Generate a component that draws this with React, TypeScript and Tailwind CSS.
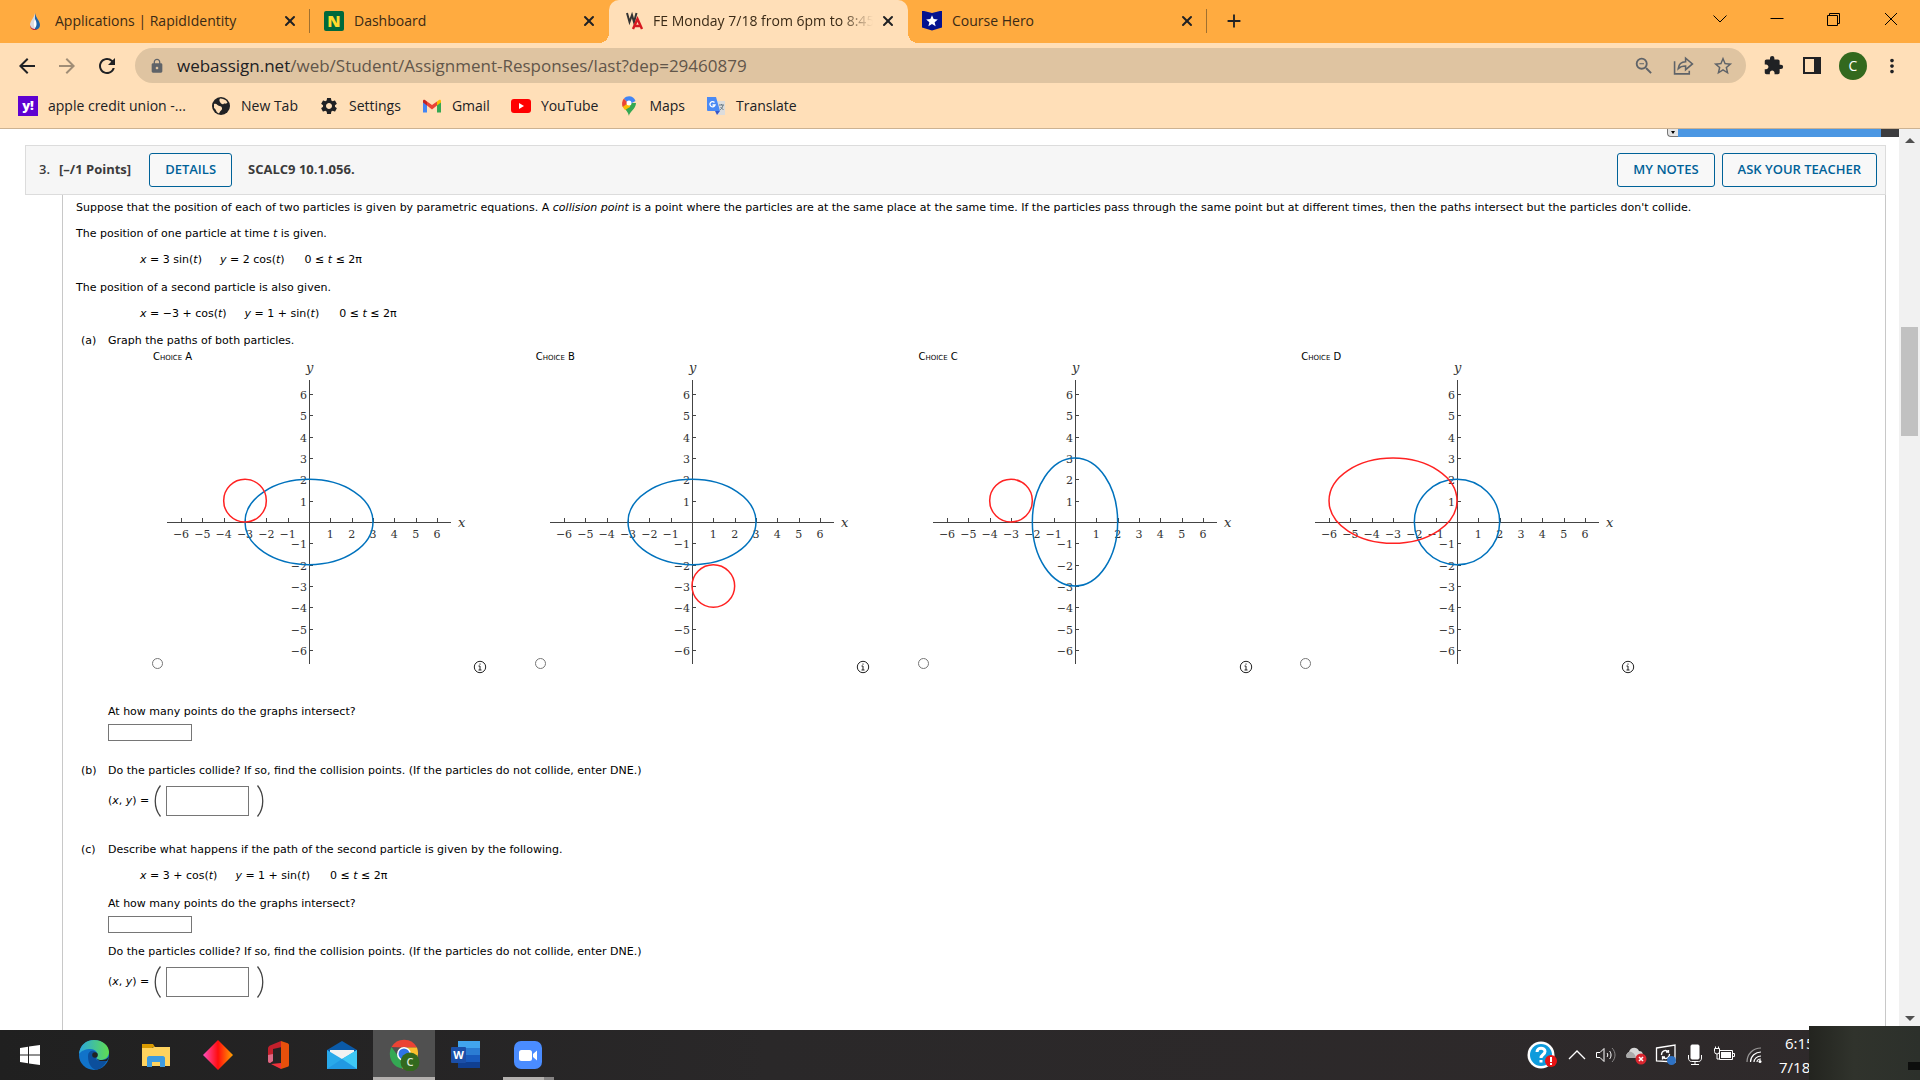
import React from "react";
import { X } from "lucide-react";
import {
  MdArrowBack,
  MdArrowForward,
  MdExtension,
  MdLock,
  MdMoreVert,
  MdRefresh,
  MdSettings,
  MdStar,
  MdStarBorder,
  MdZoomOut,
  MdAdd,
} from "react-icons/md";

type Curve = { cx: number; cy: number; rx: number; ry: number };

const UNIT = 21.33;
const ORIGIN_X = 146;
const ORIGIN_Y = 159;
const TICKS = [-6, -5, -4, -3, -2, -1, 1, 2, 3, 4, 5, 6];

const choices: { id: string; blue: Curve; red: Curve }[] = [
  { id: "A", blue: { cx: 0, cy: 0, rx: 3, ry: 2 }, red: { cx: -3, cy: 1, rx: 1, ry: 1 } },
  { id: "B", blue: { cx: 0, cy: 0, rx: 3, ry: 2 }, red: { cx: 1, cy: -3, rx: 1, ry: 1 } },
  { id: "C", blue: { cx: 0, cy: 0, rx: 2, ry: 3 }, red: { cx: -3, cy: 1, rx: 1, ry: 1 } },
  { id: "D", blue: { cx: 0, cy: 0, rx: 2, ry: 2 }, red: { cx: -3, cy: 1, rx: 3, ry: 2 } },
];

const format = (n: number) => (n < 0 ? `−${-n}` : `${n}`);

const DropIcon = () => (
  <svg viewBox="0 0 20 20" className="size-5">
    <path d="M10 2C9 7 5 10 5 14a5 5 0 0 0 5 5z" fill="#d9d9de" />
    <path d="M10 2c1 5 5 8 5 12a5 5 0 0 1-5 5z" fill="#1c62a8" />
    <path d="M5 14c1 4 4 3.500 7 4.500-3 1.500-7 0-7-4.500z" fill="#c4202f" />
    <path d="M10 8c2 3 2 7 0 9-1.500-2-1.500-6 0-9z" fill="#fff" />
  </svg>
);

const NIcon = () => (
  <span className="grid size-5 place-items-center rounded-xs bg-[#00693c] text-base leading-5 font-black text-[#ffd92e]">
    N
  </span>
);

const WaIcon = () => (
  <svg viewBox="0 0 20 20" className="size-5">
    <path d="M2 2l2.500 9L7 4l2 7 2.500-9" fill="none" stroke="#333" strokeWidth="2" />
    <path d="M8 18l4.500-10L17 18M9.500 15h6" fill="none" stroke="#d6181f" strokeWidth="2.400" />
  </svg>
);

const HeroIcon = () => (
  <span className="grid size-5 place-items-center bg-[#04128f] text-white [clip-path:polygon(0_0,50%_12%,100%_0,100%_85%,50%_100%,0_85%)]">
    <MdStar className="size-3.5" />
  </span>
);

const tabs = [
  { title: "Applications | RapidIdentity", icon: <DropIcon />, active: false, divider: true },
  { title: "Dashboard", icon: <NIcon />, active: false, divider: false },
  { title: "FE Monday 7/18 from 6pm to 8:45", icon: <WaIcon />, active: true, divider: false },
  { title: "Course Hero", icon: <HeroIcon />, active: false, divider: true },
];

const TabStrip = () => (
  <div className="flex h-[43px] items-center bg-[#ffab40] text-[14px] text-[#3a2a16]">
    <div className="flex h-full pl-[11px]">
      {tabs.map((tab) => (
        <div
          key={tab.title}
          className={
            tab.active
              ? "relative flex h-full w-[299px] items-center rounded-t-[10px] bg-[#ffdfb8] pr-3 pb-0.5 pl-4"
              : "relative flex h-full w-[299px] items-center pr-3 pb-0.5 pl-[14px]"
          }
        >
          {tab.active && (
            <>
              <span className="absolute bottom-0 -left-[10px] size-[10px] bg-[radial-gradient(circle_at_0_0,#ffab40_10px,#ffdfb8_10px)]" />
              <span className="absolute -right-[10px] bottom-0 size-[10px] bg-[radial-gradient(circle_at_100%_0,#ffab40_10px,#ffdfb8_10px)]" />
            </>
          )}
          {tab.icon}
          <span
            className={
              tab.active
                ? "ml-2 w-[220px] overflow-hidden whitespace-nowrap [mask-image:linear-gradient(to_right,black_85%,transparent)]"
                : "ml-[10px] w-[220px] overflow-hidden whitespace-nowrap"
            }
          >
            {tab.title}
          </span>
          <button aria-label="Close tab" className="ml-auto text-[#202124]">
            <X className="size-4" strokeWidth={3} />
          </button>
          {tab.divider && <span className="absolute top-[9px] right-0 h-6 w-px bg-[#a0702f]" />}
        </div>
      ))}
    </div>
    <button aria-label="New tab" className="ml-4 pb-0.5 text-[#202124]">
      <MdAdd className="size-[22px]" />
    </button>
    <div className="ml-auto flex items-center gap-[39px] pr-5 pb-[6px] text-black">
      <button aria-label="Search tabs">
        <svg viewBox="0 0 18 18" className="size-[18px]" fill="none" stroke="currentColor">
          <path d="M2.500 5.500L9 12l6.500-6.500" />
        </svg>
      </button>
      <button aria-label="Minimize">
        <svg viewBox="0 0 18 18" className="size-[18px]" stroke="currentColor">
          <path d="M2.500 8.500h13" />
        </svg>
      </button>
      <button aria-label="Restore">
        <svg viewBox="0 0 18 18" className="size-[18px]" fill="none" stroke="currentColor">
          <path d="M2.500 5.500h10v10h-10zM4.500 5.500v-2h10v10h-2" />
        </svg>
      </button>
      <button aria-label="Close">
        <svg viewBox="0 0 18 18" className="size-[18px]" fill="none" stroke="currentColor">
          <path d="M3 3l12 12M15 3L3 15" />
        </svg>
      </button>
    </div>
  </div>
);

const Toolbar = () => (
  <div className="flex h-[45px] items-center pr-[17px] pl-[15px] text-[#202124]">
    <button aria-label="Back">
      <MdArrowBack className="size-6" />
    </button>
    <button aria-label="Forward" className="ml-4 text-[#a08d76]">
      <MdArrowForward className="size-6" />
    </button>
    <button aria-label="Reload" className="ml-4">
      <MdRefresh className="size-6" />
    </button>
    <div className="ml-4 flex h-[35px] flex-1 items-center rounded-full bg-[#dfc4a1] pr-3 pl-[14px] text-[#5f6368]">
      <MdLock className="size-4" />
      <div className="ml-3 text-[17px] text-[#62564a]">
        <span className="text-[#202124]">webassign.net</span>
        /web/Student/Assignment-Responses/last?dep=29460879
      </div>
      <div className="ml-auto flex items-center gap-[18px]">
        <MdZoomOut className="size-[22px]" />
        <svg viewBox="0 0 20 20" className="size-[21px]" fill="none" stroke="currentColor" strokeWidth="1.500">
          <path d="M1.500 6v12h14v-3" />
          <path d="M5 13c.5-4.500 3-6.500 7-6.500V3l6.500 5.500L12 14v-3.500c-3 0-5 .5-7 2.500z" />
        </svg>
        <MdStarBorder className="size-[22px]" />
      </div>
    </div>
    <div className="ml-[17px] flex items-center">
      <MdExtension className="size-[21px]" />
      <span className="ml-[19px] h-[17px] w-[18px] border-2 border-r-7 border-current" />
      <span className="ml-[18px] grid size-7 place-items-center rounded-full bg-[#33691e] text-[14px] text-white">C</span>
      <MdMoreVert className="ml-[14px] size-[22px]" />
    </div>
  </div>
);

const bookmarks = [
  {
    title: "apple credit union -...",
    icon: (
      <span className="grid size-5 place-items-center bg-[#5f01d1] text-[13px] leading-none font-extrabold text-white">
        y!
      </span>
    ),
  },
  {
    title: "New Tab",
    icon: (
      <svg viewBox="0 0 20 20" className="size-5">
        <circle cx="10" cy="10" r="9" fill="#202124" />
        <path d="M3 8c3-1 3 2 5.500 2S12 13 10 14.500 9 18 7 17 5 13 3 12zM9 2.500c3 0 6 1 7.500 4-1.500 2-3 .5-4 1.500S9.500 7 9 6 8 4 9 2.500z" fill="#ffdfb8" />
      </svg>
    ),
  },
  { title: "Settings", icon: <MdSettings className="size-5 text-[#202124]" /> },
  {
    title: "Gmail",
    icon: (
      <svg viewBox="0 0 20 20" className="size-5">
        <path d="M1 5v11.500h4V8z" fill="#4285f4" />
        <path d="M19 5v11.500h-4V8z" fill="#34a853" />
        <path d="M15 5.500l2-1.500c1-.6 2 0 2 1v1.500l-4 3z" fill="#fbbc04" />
        <path d="M1 5c0-1 1-1.600 2-1l2 1.500v4l-4-3z" fill="#c5221f" />
        <path d="M5 5.500L10 9l5-3.500v4L10 13.500 5 9.500z" fill="#ea4335" />
      </svg>
    ),
  },
  {
    title: "YouTube",
    icon: (
      <svg viewBox="0 0 20 20" className="size-5">
        <rect y="3" width="20" height="14" rx="3" fill="#f00" />
        <path d="M8 7v6l5-3z" fill="#fff" />
      </svg>
    ),
  },
  {
    title: "Maps",
    icon: (
      <svg viewBox="0 0 20 20" className="size-5">
        <path d="M10 20c0-4 7-7 7-13h-7L4.500 11.500C7 14 9 16 10 20z" fill="#34a853" />
        <path d="M3.500 9L12 5l-1 6-5 3C4.500 12.500 3.700 11 3.500 9z" fill="#fbbc04" />
        <path d="M5 2.500L9 7l-5.300 4C2.500 8 3 4.500 5 2.500z" fill="#ea4335" />
        <path d="M5 2.500C8-1 15-.5 16.500 5L11 8 9 7z" fill="#4285f4" />
        <circle cx="10" cy="7" r="2.500" fill="#fff" />
      </svg>
    ),
  },
  {
    title: "Translate",
    icon: (
      <svg viewBox="0 0 20 20" className="size-5">
        <path d="M8 5h11v14h-7z" fill="#dcdcdc" />
        <path d="M1 1h9l4 14H2a1 1 0 0 1-1-1z" fill="#4a8af4" />
        <path d="M9 15h5l-3 4z" fill="#3556c9" />
        <path d="M8.500 6.500A2.600 2.600 0 1 0 9 9H6.500" fill="none" stroke="#fff" strokeWidth="1.300" />
        <path d="M13 9h5M15.500 8v1M17 9c-.5 3-2 4-3 5M14.500 11l3 3" fill="none" stroke="#6a7b86" />
      </svg>
    ),
  },
];

const BookmarkBar = () => (
  <nav className="flex h-10 items-center gap-[21px] pb-[5px] pl-[18px] text-[14px]">
    {bookmarks.map((item) => (
      <a key={item.title} href="#" className="flex items-center gap-[10px] text-[#202124] first:w-[172px]">
        {item.icon}
        {item.title}
      </a>
    ))}
  </nav>
);

const Graph = ({ blue, red }: { blue: Curve; red: Curve }) => {
  const ellipse = (c: Curve, stroke: string) => (
    <ellipse
      cx={ORIGIN_X + c.cx * UNIT}
      cy={ORIGIN_Y - c.cy * UNIT}
      rx={c.rx * UNIT}
      ry={c.ry * UNIT}
      fill="none"
      stroke={stroke}
      strokeWidth="1.500"
    />
  );
  return (
    <svg
      viewBox="0 0 311 310"
      className="h-[310px] w-[311px] overflow-visible font-['DejaVu_Serif',serif] text-[11px]"
      fill="#333"
    >
      <g stroke="#444">
        <path d="M4 159.500h284M146.500 17v284" fill="none" />
        {TICKS.map((n) => (
          <path
            key={n}
            d={`M${Math.round(ORIGIN_X + n * UNIT) + 0.5} 159v-4M146 ${Math.round(ORIGIN_Y - n * UNIT) + 0.5}h4`}
          />
        ))}
      </g>
      {TICKS.map((n) => (
        <React.Fragment key={n}>
          <text x={ORIGIN_X + n * UNIT} y={ORIGIN_Y + 16} textAnchor="middle">
            {format(n)}
          </text>
          <text x={ORIGIN_X - 2} y={ORIGIN_Y - n * UNIT + 5} textAnchor="end">
            {format(n)}
          </text>
        </React.Fragment>
      ))}
      <text x="143" y="9" className="text-[13px] italic">
        y
      </text>
      <text x="295" y="164" className="text-[13px] italic">
        x
      </text>
      {ellipse(blue, "#0072bd")}
      {ellipse(red, "#ff2222")}
    </svg>
  );
};

const InfoIcon = () => (
  <svg viewBox="0 0 12 12" className="size-3 overflow-visible" fill="none" stroke="#222">
    <circle cx="6" cy="6" r="5.700" />
    <path d="M4.500 5h1.500v4M4.500 9h3M6 2.500v1.200" />
  </svg>
);

const Equations = ({ x, y }: { x: string; y: string }) => (
  <p className="flex gap-5 whitespace-pre">
    <span className="-mr-[2px]">
      <i>x</i> = {x}(<i>t</i>)
    </span>
    <span>
      <i>y</i> = {y}(<i>t</i>)
    </span>
    <span>
      0 ≤ <i>t</i> ≤ 2π
    </span>
  </p>
);

const CountAnswer = ({ id }: { id: string }) => (
  <div>
    <label htmlFor={id} className="block">
      At how many points do the graphs intersect?
    </label>
    <input id={id} className="mt-1 block h-[17px] w-[84px] border border-[#767676] bg-white px-1" />
  </div>
);

const PointAnswer = ({ id }: { id: string }) => (
  <div className="mt-1.5 flex h-8 items-center">
    <label htmlFor={id} className="w-[46px]">
      (<i>x</i>, <i>y</i>) =
    </label>
    <svg viewBox="0 0 7 32" className="h-8 w-[7px]" fill="none" stroke="#444">
      <path d="M6.500.5C-.5 9-.5 23 6.500 31.500" strokeWidth="1.300" />
    </svg>
    <input id={id} className="ml-[5px] h-[30px] w-[83px] border border-[#767676] bg-white px-1" />
    <svg viewBox="0 0 7 32" className="ml-2 h-8 w-[7px]" fill="none" stroke="#444">
      <path d="M.5.5c7 8.500 7 22.500 0 31" strokeWidth="1.300" />
    </svg>
  </div>
);

const Part = ({ letter, children }: { letter: string; children: React.ReactNode }) => (
  <div className="flex pl-[5px]">
    <span className="w-[27px] shrink-0">({letter})</span>
    <div className="flex-1">{children}</div>
  </div>
);

const outlineButton =
  "flex h-[34px] items-center rounded-[3px] border border-[#006298] bg-[#f8f8f8] px-[15px] text-[13px] font-semibold text-[#006298]";

const Question = () => (
  <section className="mt-2 mr-[13px] ml-[25px] flex flex-1 flex-col">
    <header className="flex h-[50px] items-center border border-[#dcdcdc] bg-[#f6f6f6] pr-2 pl-[13px] font-['Open_Sans',sans-serif] text-[13px] font-bold text-[#3b3b3b]">
      <span className="w-5 font-semibold">3.</span>
      <span>[–/1 Points]</span>
      <button className={`${outlineButton} mr-4 ml-[18px]`}>DETAILS</button>
      <span>SCALC9 10.1.056.</span>
      <div className="ml-auto flex gap-[7px]">
        <button className={outlineButton}>MY NOTES</button>
        <button className={outlineButton}>ASK YOUR TEACHER</button>
      </div>
    </header>
    <div className="ml-[37px] flex-1 border-x border-[#c8c8c8] pt-[5px] pl-[13px] font-['DejaVu_Sans',sans-serif] text-[11px] leading-4 text-black">
      <p className="whitespace-nowrap">
        Suppose that the position of each of two particles is given by parametric equations. A <i>collision point</i> is
        a point where the particles are at the same place at the same time. If the particles pass through the same point
        but at different times, then the paths intersect but the particles don't collide.
      </p>
      <p className="mt-[10px]">
        The position of one particle at time <i>t</i> is given.
      </p>
      <div className="mt-[10px] ml-16">
        <Equations x="3 sin" y="2 cos" />
      </div>
      <p className="mt-3">The position of a second particle is also given.</p>
      <div className="mt-[10px] ml-16">
        <Equations x="−3 + cos" y="1 + sin" />
      </div>
      <div className="mt-[11px]">
        <Part letter="a">
          Graph the paths of both particles.
          <div className="mt-0.5 grid max-w-[1575px] grid-cols-4 pl-11">
            {choices.map((choice) => (
              <div key={choice.id} className="w-fit">
                <label htmlFor={`choice-${choice.id}`} className="ml-px block text-[10px] leading-3 [font-variant:small-caps]">
                  Choice {choice.id}
                </label>
                <div className="flex items-end">
                  <input
                    id={`choice-${choice.id}`}
                    type="radio"
                    name="paths"
                    className="mb-1 size-[11px] appearance-none rounded-full border border-[#767676] bg-white"
                  />
                  <Graph blue={choice.blue} red={choice.red} />
                  <InfoIcon />
                </div>
              </div>
            ))}
          </div>
          <div className="mt-[31px]">
            <CountAnswer id="count-a" />
          </div>
        </Part>
      </div>
      <div className="mt-[22px]">
        <Part letter="b">
          Do the particles collide? If so, find the collision points. (If the particles do not collide, enter DNE.)
          <PointAnswer id="point-b" />
        </Part>
      </div>
      <div className="mt-[25px]">
        <Part letter="c">
          Describe what happens if the path of the second particle is given by the following.
          <div className="mt-[10px] mb-3 ml-8">
            <Equations x="3 + cos" y="1 + sin" />
          </div>
          <CountAnswer id="count-c" />
          <p className="mt-[11px]">
            Do the particles collide? If so, find the collision points. (If the particles do not collide, enter DNE.)
          </p>
          <PointAnswer id="point-c" />
        </Part>
      </div>
    </div>
  </section>
);

const Scrollbar = () => (
  <div className="flex w-[21px] shrink-0 flex-col items-center bg-[#f1f1f1] py-[9px]">
    <span className="border-x-5 border-b-5 border-x-transparent border-b-[#505050]" />
    <span className="mt-[184px] h-[109px] w-[17px] bg-[#c1c1c1]" />
    <span className="mt-auto border-x-5 border-t-5 border-x-transparent border-t-[#505050]" />
  </div>
);

const taskbarApps = [
  {
    name: "Edge",
    icon: (
      <svg viewBox="0 0 32 32" className="size-8">
        <defs>
          <linearGradient id="edgeTop" x1="0" x2="1">
            <stop offset="0" stopColor="#2aa7e0" />
            <stop offset="1" stopColor="#5fdc50" />
          </linearGradient>
        </defs>
        <circle cx="16" cy="16" r="15" fill="#1173c9" />
        <path d="M1 15C2 6 8 1 16 1c9 0 15 6 15 12 0 5-4 8-8 8-3 0-5-1-4-3 2-4-2-8-6-8C7 10 3 12 1 15z" fill="url(#edgeTop)" />
        <path d="M10 17c0-4 3-6 6-5 4 2 3 5 2 6-1 2 1 4 5 4 3 0 5-1 6-1-2 5-6 9-11 10-6-2-8-8-8-14z" fill="#0c4f9c" />
        <path d="M19 18c-1 2 1 4 5 4h5l3-6c-2 4-5 5-9 5-3 0-5-1-4-3z" fill="#222" />
        <circle cx="17" cy="16" r="2.800" fill="#222" />
      </svg>
    ),
  },
  {
    name: "File Explorer",
    icon: (
      <svg viewBox="0 0 32 32" className="size-8">
        <path d="M2 5h11l2 3h-2l-2 2H2z" fill="#d99a00" />
        <path d="M2 9h10l2-1h16v19H2z" fill="#ffd35e" />
        <path d="M7 28v-9c0-1 1-2 2-2h14c1 0 2 1 2 2v9h-5v-5h-8v5z" fill="#3d9be0" />
      </svg>
    ),
  },
  {
    name: "Diamond",
    icon: (
      <svg viewBox="0 0 32 32" className="size-8">
        <defs>
          <linearGradient id="diamond" x1="0" x2="1">
            <stop offset="0" stopColor="#ff4fc0" />
            <stop offset="0.500" stopColor="#ff0d0d" />
            <stop offset="1" stopColor="#ffa200" />
          </linearGradient>
        </defs>
        <path d="M16 1l15 15-15 15L1 16z" fill="url(#diamond)" />
      </svg>
    ),
  },
  {
    name: "Office",
    icon: (
      <svg viewBox="0 0 32 32" className="size-8">
        <path d="M17 2L6 6.500c-1 .5-2 1.500-2 3V22c0 1 1 2 2 2l3-2V10l9-2z" fill="#c2202c" />
        <path d="M4 16v6c0 1 1 2 2 2l3-2v-7z" fill="#dd6a86" />
        <path d="M17 2l6 2c1 .4 2 1 2 2v20c0 1-1 2-2 2l-6 2z" fill="#e8500b" />
        <path d="M7 25l10-1v6z" fill="#f0323c" />
      </svg>
    ),
  },
  {
    name: "Mail",
    icon: (
      <svg viewBox="0 0 32 32" className="size-8">
        <path d="M1 11L16 2l15 9v10H1z" fill="#0a5aa8" />
        <path d="M4 11h24v9H4z" fill="#f2f2f2" />
        <path d="M1 11l15 9 15-9v19H1z" fill="#29a9ea" />
        <path d="M31 11L16 20l15 10z" fill="#3ec8f5" />
        <path d="M16 20l15 10H1z" fill="#1c8fdc" opacity="0.600" />
      </svg>
    ),
  },
  {
    name: "Chrome",
    icon: (
      <svg viewBox="0 0 32 32" className="size-8">
        <path d="M3.500 8A14.500 14.500 0 0 1 29 8.500H15z" fill="#ea4335" />
        <path d="M3.500 8C-1 17 4 28 14 29.500l6-11L10 17z" fill="#34a853" />
        <path d="M29 8.500c4 11-4 21-15 21l7-12-2-9z" fill="#fbc02d" />
        <circle cx="16" cy="15" r="7" fill="#fff" />
        <circle cx="16" cy="15" r="5.500" fill="#2f74e8" />
        <circle cx="22" cy="23" r="9.500" fill="#33691e" />
        <text x="22" y="27" textAnchor="middle" fill="#dfe8d8" className="text-[11px] font-semibold">
          C
        </text>
      </svg>
    ),
  },
  {
    name: "Word",
    icon: (
      <svg viewBox="0 0 32 32" className="size-8">
        <path d="M8 2h22v7H8z" fill="#41a5ee" />
        <path d="M8 9h22v7H8z" fill="#2b7cd3" />
        <path d="M8 16h22v7H8z" fill="#185abd" />
        <path d="M8 23h22v6H8z" fill="#103f91" />
        <rect x="1" y="8" width="15" height="16" rx="1" fill="#1b4fa8" />
        <text x="8.500" y="20" textAnchor="middle" fill="#fff" className="text-[11px] font-bold">
          W
        </text>
      </svg>
    ),
  },
  {
    name: "Zoom",
    icon: (
      <svg viewBox="0 0 32 32" className="size-8">
        <rect x="2" y="2" width="28" height="28" rx="7" fill="#4a8cff" />
        <rect x="7" y="11" width="13" height="11" rx="2.500" fill="#fff" />
        <path d="M21 15l4-3.500v10L21 18z" fill="#fff" />
      </svg>
    ),
  },
];

const Tray = () => (
  <div className="flex items-center gap-2 pr-4 text-white">
    <svg viewBox="0 0 32 28" className="h-7 w-8">
      <circle cx="14" cy="14" r="13.500" fill="#fff" />
      <circle cx="14" cy="14" r="11" fill="#0d9bdc" />
      <path d="M10 11c0-5 8-5 8-.500 0 3-4 3-4 6.500M14 19v2.500" fill="none" stroke="#fff" strokeWidth="3" />
      <circle cx="24" cy="20" r="6" fill="#e81313" />
      <path d="M24 16v5M24 22v2" stroke="#fff" strokeWidth="2" />
    </svg>
    <svg viewBox="0 0 20 20" className="size-5" fill="none" stroke="currentColor" strokeWidth="1.300">
      <path d="M2 14l8-8 8 8" />
    </svg>
    <svg viewBox="0 0 22 20" className="h-5 w-[22px]" fill="none" stroke="currentColor">
      <path d="M1.500 7.500H5l4-4v13l-4-4H1.500zM12 8c1 1 1 3 0 4M14.500 6c2 2 2 6 0 8" />
      <path d="M17 3c4 4 4 10 0 14" stroke="#8a8888" />
    </svg>
    <svg viewBox="0 0 22 20" className="h-5 w-[22px]">
      <path d="M2 13a4 4 0 0 1 2-6c1-5 8-6 10-1 4 0 4 3 4 7z" fill="#d6d6d6" />
      <path d="M2 13a4 4 0 0 1 2-6c2-1 6 1 7 6z" fill="#a9a9a9" />
      <circle cx="16" cy="14" r="5.500" fill="#d7262f" />
      <path d="M14 12l4 4M18 12l-4 4" stroke="#fff" strokeWidth="1.500" />
    </svg>
    <svg viewBox="0 0 22 22" className="size-[22px]" fill="none" stroke="currentColor" strokeWidth="1.300">
      <path d="M1.500 4L20 1v17l-18.500-1z" />
      <path d="M6.500 11c0-4 4-6 7-3v-2M13.500 8h-2.500M14.500 10c0 4-4 6-7 3v2.500M7.500 13H10" />
      <circle cx="16.500" cy="16.500" r="4.500" fill="#2f72c4" stroke="none" />
    </svg>
    <svg viewBox="0 0 20 22" className="h-[22px] w-5" fill="none" stroke="currentColor">
      <rect x="6" y="1" width="8" height="14" rx="1" fill="#fff" />
      <path d="M3.500 11v3c0 2 1 3.500 3 3.500h7c2 0 3-1.500 3-3.500v-3M10 17v3M6 20.500h8" />
    </svg>
    <svg viewBox="0 0 22 20" className="h-5 w-[22px]" fill="none" stroke="currentColor">
      <path d="M6.500 5.500h13v9h-13zM20 8.500h1.500v3H20M1.500 3.500h5v3a2 2 0 0 1-5 0zM2.500 1.500v2M5.500 1.500v2M4 9v5h2.500" />
      <rect x="8" y="7" width="10" height="6" fill="#fff" stroke="none" />
    </svg>
    <svg viewBox="0 0 20 20" className="size-5" fill="none" stroke="currentColor" strokeWidth="1.200">
      <path d="M4 17C4 9 10 3 18 3" stroke="#9a9898" />
      <path d="M7.500 17c0-6 5-10 10.500-10M11 17c0-3 3-6 7-6M14 17c0-2 1.500-3 4-3" />
      <circle cx="17" cy="16.500" r="1.500" fill="#fff" stroke="none" />
    </svg>
  </div>
);

const Taskbar = () => (
  <footer className="relative flex h-[50px] shrink-0 items-stretch bg-[linear-gradient(to_right,#202020,#2a2829_40%,#2f2a2b)]">
    <button aria-label="Start" className="mr-[3px] grid w-[60px] place-items-center text-white">
      <svg viewBox="0 0 20 20" className="size-5" fill="currentColor">
        <path d="M0 3l8-1.200v7.700H0zM9 1.600L20 0v9.500H9zM0 10.500h8v7.700L0 17zM9 10.500h11V20L9 18.400z" />
      </svg>
    </button>
    {taskbarApps.map((app) => (
      <button
        key={app.name}
        aria-label={app.name}
        className={
          app.name === "Chrome"
            ? "grid w-[62px] place-items-center border-b-3 border-[#b3b0ae] bg-[#505050] pt-[3px]"
            : "relative grid w-[62px] place-items-center"
        }
      >
        {app.icon}
        {app.name === "Zoom" && (
          <span className="absolute bottom-0 left-1.5 h-[3px] w-[51px] bg-[linear-gradient(to_right,#b3b0ae_80%,#858383_80%)]" />
        )}
      </button>
    ))}
    <div className="ml-auto flex">
      <Tray />
      <div className="w-[141px] pt-px text-[15px] leading-6 text-white">
        <div className="ml-[6px]">6:15</div>
        <div>7/18/</div>
      </div>
    </div>
    <div className="absolute right-0 bottom-0 h-[54px] w-[111px] bg-[linear-gradient(to_right,#23241f,#30332c_40%,#2c302b)]">
      <span className="absolute right-0 bottom-2.5 h-2 w-3 bg-[#0d0e0d]" />
    </div>
  </footer>
);

const App = () => {
  return (
    <div className="flex h-screen flex-col overflow-hidden bg-white font-['Open_Sans','Noto_Sans',sans-serif]">
      <div className="shrink-0 border-b border-[#ccb292] bg-[#ffdfb8]">
        <TabStrip />
        <Toolbar />
        <BookmarkBar />
      </div>
      <div className="flex min-h-0 flex-1">
        <main className="flex min-w-0 flex-1 flex-col overflow-hidden">
          <div className="flex h-2 shrink-0 justify-end">
            <span className="flex w-[11px] items-center justify-center rounded-bl-sm border-b border-l border-[#777] bg-[#e4e4e4]">
              <span className="border-x-2 border-t-3 border-x-transparent border-t-black" />
            </span>
            <span className="w-[203px] bg-[#4b97e3]" />
            <span className="w-[18px] bg-[#3d3d3f]" />
          </div>
          <Question />
        </main>
        <Scrollbar />
      </div>
      <Taskbar />
    </div>
  );
};

export default App;
